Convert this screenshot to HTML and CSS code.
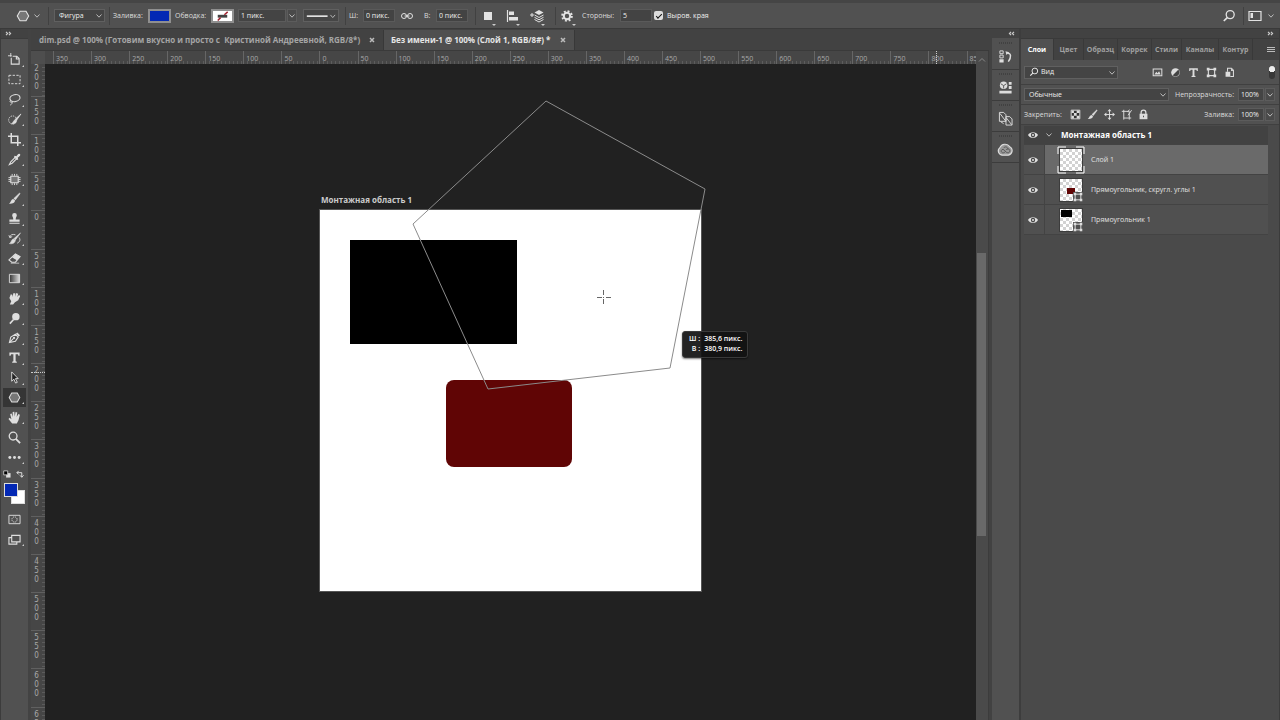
FILE: index.html
```html
<!DOCTYPE html>
<html lang="ru">
<head>
<meta charset="utf-8">
<title>Без имени-1</title>
<link rel="stylesheet" href="styles.css">
</head>
<body>
<svg class="defs" aria-hidden="true">
  <defs>
    <symbol id="chev" viewBox="0 0 8 6"><path d="M1.5 1.5 4 4.2 6.500 1.500" fill="none" stroke="currentColor" stroke-width="1"/></symbol>
    <symbol id="eye" viewBox="0 0 12 8"><path d="M1 4C3 .2 9 .2 11 4 9 7.800 3 7.800 1 4Z" fill="currentColor"/><circle cx="6" cy="4" r="2.200" fill="#484848"/><circle cx="6" cy="4" r="1" fill="currentColor"/></symbol>
    <symbol id="search" viewBox="0 0 14 14"><circle cx="8.200" cy="5.600" r="4" fill="none" stroke="currentColor" stroke-width="1.300"/><path d="M5.300 8.600 1.800 12" stroke="currentColor" stroke-width="1.700"/></symbol>
    <symbol id="hex" viewBox="0 0 14 14"><path d="M4 2.200H10L12.700 7 10 11.800H4L1.300 7Z" fill="#777" stroke="currentColor" stroke-width="1.100"/></symbol>
    <symbol id="dbl" viewBox="0 0 8 6"><path d="M1 1 3 3 1 5M4.500 1 6.500 3 4.500 5" fill="none" stroke="currentColor" stroke-width="1.400"/></symbol>
    <symbol id="brush" viewBox="0 0 14 14"><path d="M12.500 1 13 1.800 8 8.500 6.200 7Z" fill="currentColor" stroke="currentColor" stroke-width=".5"/><path d="M5.600 7.500 7.600 9.200C7.500 12 4 13 1 12.600 3 11.500 3 8 5.600 7.500Z" fill="currentColor"/></symbol>
    <symbol id="type" viewBox="0 0 14 14"><path d="M1.500 1.500H12.500V5H11.200L10.700 3.500H8.200V11L9.500 11.500V12.700H4.500V11.500L5.800 11V3.500H3.300L2.800 5H1.500Z" fill="currentColor"/></symbol>
    <symbol id="shape" viewBox="0 0 14 14"><path d="M3 3H11V11H3Z" fill="none" stroke="currentColor" stroke-width="1.400"/><path d="M1 1H4.500V4.500H1ZM9.500 1H13V4.500H9.500ZM1 9.500H4.500V13H1ZM9.500 9.500H13V13H9.500Z" fill="currentColor"/></symbol>
    <symbol id="close" viewBox="0 0 6 6"><path d="M1 1 5 5M5 1 1 5" stroke="currentColor" stroke-width="1.500"/></symbol>
  </defs>
</svg>
<div class="app">
  <header class="options">
    <button class="ib" aria-label="Многоугольник"><svg class="i14"><use href="#hex"/></svg></button>
    <button class="ib" aria-label="Наборы"><svg class="chev"><use href="#chev"/></svg></button>
    <i class="sep"></i>
    <span class="sel"><select aria-label="Режим"><option>Фигура</option></select><svg class="chev"><use href="#chev"/></svg></span>
    <i class="sep"></i>
    <span class="lab">Заливка:</span>
    <button class="swatch blue" aria-label="Цвет заливки"></button>
    <span class="lab">Обводка:</span>
    <button class="swatch none" aria-label="Цвет обводки"><svg viewBox="0 0 20 11"><path d="M5 4H15V7H5Z" fill="#444"/><path d="M5 10 8 7M12 4 15.500 1" stroke="#a32330" stroke-width="1.600"/></svg></button>
    <span class="combo"><input aria-label="Толщина обводки" value="1 пикс."><button aria-label="Толщина"><svg class="chev"><use href="#chev"/></svg></button></span>
    <button class="linebtn" aria-label="Тип линии"><svg viewBox="0 0 36 13"><path d="M3 6.500H25" stroke="#fff" stroke-width="1.500"/><path d="M28 5.200 30.500 8 33 5.200" fill="none" stroke="#bbb"/></svg></button>
    <i class="sep"></i>
    <label class="lab" for="w">Ш:</label><input class="fld" id="w" value="0 пикс.">
    <button class="ib" aria-label="Связать"><svg class="i14" viewBox="0 0 14 14"><circle cx="4" cy="7" r="2.500" fill="none" stroke="currentColor"/><circle cx="10" cy="7" r="2.500" fill="none" stroke="currentColor"/><path d="M4.500 7H9.500" stroke="currentColor"/></svg></button>
    <label class="lab" for="h">В:</label><input class="fld" id="h" value="0 пикс.">
    <i class="sep"></i>
    <button class="ib tri" aria-label="Операции"><svg class="i14" viewBox="0 0 14 14"><path d="M3 3H11V11H3Z" fill="currentColor"/></svg></button>
    <button class="ib tri" aria-label="Выравнивание"><svg class="i14" viewBox="0 0 14 14"><path d="M2.500 1V13" stroke="currentColor" stroke-width="1.200"/><path d="M4 2.500H9V6H4ZM4 8H13V11.500H4Z" fill="currentColor"/></svg></button>
    <button class="ib tri" aria-label="Порядок"><svg class="i14" viewBox="0 0 14 14"><path d="M9 1 13.500 3.500 9 6 4.500 3.500Z" fill="currentColor"/><path d="M4.500 6 9 8.500 13.500 6M4.500 8.300 9 10.800 13.500 8.300M4.500 10.500 9 13 13.500 10.500" fill="none" stroke="currentColor"/><path d="M0 6H4M2 4V8" stroke="currentColor"/></svg></button>
    <i class="sep"></i>
    <button class="ib tri" aria-label="Параметры"><svg class="i14" viewBox="0 0 14 14"><circle cx="6" cy="7" r="3.200" fill="none" stroke="currentColor" stroke-width="2"/><circle cx="6" cy="7" r="4.800" fill="none" stroke="currentColor" stroke-width="2" stroke-dasharray="1.900 1.870"/></svg></button>
    <label class="lab" for="sides">Стороны:</label><input class="fld" id="sides" value="5">
    <label class="check"><input type="checkbox" checked>Выров. края</label>
    <span></span>
    <button class="ib" aria-label="Поиск"><svg class="i14"><use href="#search"/></svg></button>
    <i class="sep"></i>
    <button class="ib" aria-label="Рабочая среда"><svg class="i14" viewBox="0 0 14 14"><path d="M1 2.500H13V11.500H1Z" fill="none" stroke="currentColor" stroke-width="1.200"/><path d="M2.500 4H5V9H2.500Z" fill="currentColor"/></svg></button>
    <button class="ib" aria-label="Выбор среды"><svg class="chev"><use href="#chev"/></svg></button>
  </header>

  <div class="body">
    <aside class="tools">
      <div class="coltop"><svg class="dbl"><use href="#dbl"/></svg></div>
      <div class="toolbox">
        <div class="toolgrid">
          <button aria-label="Монтажная область"><svg viewBox="0 0 14 14"><path d="M3 0V4M0 3H4" stroke="currentColor"/><path d="M3.500 5V12H12V6L9.500 3.500H5M9 4V6.500H12" fill="none" stroke="currentColor" stroke-width="1.200"/></svg></button>
          <button aria-label="Выделение"><svg viewBox="0 0 14 14"><path d="M1 2.500H13V11.500H1Z" fill="none" stroke="currentColor" stroke-dasharray="2.500 1.500"/></svg></button>
          <button aria-label="Лассо"><svg viewBox="0 0 14 14"><ellipse cx="7.500" cy="5.500" rx="5.500" ry="3.700" transform="rotate(-12 7.500 5.500)" fill="none" stroke="currentColor" stroke-width="1.200"/><path d="M3 8C1 9 3 11 4.500 9.500 5 11 3.500 12.500 2.500 13" fill="none" stroke="currentColor"/></svg></button>
          <button aria-label="Быстрое выделение"><svg viewBox="0 0 14 14"><circle cx="5" cy="7.500" r="4.300" fill="none" stroke="currentColor" stroke-dasharray="1.500 1"/><path d="M14 1 9 8 7.500 7ZM7.500 7.500 9 9C8.500 11.500 6 12 4 11.500 6 10.500 5.500 8 7.500 7.500Z" fill="currentColor" stroke="currentColor" stroke-width=".8"/></svg></button>
          <button aria-label="Рамка"><svg viewBox="0 0 14 14"><path d="M3.500 0V10.500H14M0 3.500H10.500V14" fill="none" stroke="currentColor" stroke-width="1.600"/></svg></button>
          <button aria-label="Пипетка"><svg viewBox="0 0 14 14"><path d="M8.500 4 3 9.500 1.500 12.500 4.500 11 10 5.500" fill="none" stroke="currentColor" stroke-width="1.200"/><path d="M7 3 9 3.500 11 1Q14 0 13 3L10.500 5 11 7 9.500 7.500 6.500 4.500Z" fill="currentColor"/></svg></button>
          <button aria-label="Заплатка"><svg viewBox="0 0 14 14"><path d="M3 3.500H11V10.500H3Z" fill="#777" stroke="currentColor" stroke-width="1.200"/><path d="M4.500 1V3M7 1V3M9.500 1V3M4.500 11V13M7 11V13M9.500 11V13M.5 5H3M.5 7H3M.5 9H3M11 5H13.500M11 7H13.500M11 9H13.500" stroke="currentColor"/></svg></button>
          <button aria-label="Кисть"><svg><use href="#brush"/></svg></button>
          <button aria-label="Штамп"><svg viewBox="0 0 14 14"><path d="M4.500 3.500A2.500 2.500 0 0 1 9.500 3.500C9.500 5 8.300 5.500 8.300 8H12.500V10.500H1.500V8H5.700C5.700 5.500 4.500 5 4.500 3.500ZM1.500 11.500H12.500V12.700H1.500Z" fill="currentColor"/></svg></button>
          <button aria-label="Архивная кисть"><svg viewBox="0 0 14 14"><path d="M13.500 1 8 8.500 6.500 7ZM6 7.500 8 9C7.500 12.500 4 13 1.500 12.500 3.500 11.500 3.500 8 6 7.500Z" fill="currentColor" stroke="currentColor" stroke-width=".6"/><path d="M2 6C2 3 5 2 8 3M1 3.500 2 6 4.500 5M12 6C14 9 12 11 10 12" fill="none" stroke="currentColor"/></svg></button>
          <button aria-label="Ластик"><svg viewBox="0 0 14 14"><path d="M8 2 13 5 8 11H4L1 8.500Z" fill="none" stroke="currentColor" stroke-width="1.200"/><path d="M8 2 13 5 9.500 9 4.500 6ZM3 11.500H12V12.500H3Z" fill="currentColor"/></svg></button>
          <button aria-label="Градиент"><svg viewBox="0 0 14 14"><defs><linearGradient id="g"><stop stop-color="#333"/><stop offset="1" stop-color="#ddd"/></linearGradient></defs><path d="M1.500 2.500H12.500V11.500H1.500Z" fill="url(#g)" stroke="currentColor"/></svg></button>
          <button aria-label="Палец"><svg viewBox="0 0 14 14"><path d="M2 13.500 3.500 10 1.500 6.500 3 2.500 4.500 3V5.500L6 1 8 1.500 7.500 5 9 1 11 2 10 5.500 12 3 13 4.500 11 9 7.500 11 5.500 13.500Z" fill="currentColor"/></svg></button>
          <button aria-label="Осветлитель"><svg viewBox="0 0 14 14"><circle cx="8.500" cy="5" r="4" fill="currentColor"/><path d="M6 8 2 12.500" stroke="currentColor" stroke-width="1.700"/></svg></button>
          <button aria-label="Перо"><svg viewBox="0 0 14 14"><path d="M1.500 12.500 3 6.500 8 3.500 11 6.500 8 11ZM1.500 12.500 6 8" fill="none" stroke="currentColor" stroke-width="1.200"/><circle cx="6.500" cy="7.500" r="1.200" fill="currentColor"/><path d="M8.500 3 10 1.500 13 4.500 11.500 6Z" fill="currentColor"/></svg></button>
          <button aria-label="Текст"><svg><use href="#type"/></svg></button>
          <button aria-label="Стрелка"><svg viewBox="0 0 14 14"><path d="M4 1V11L6.300 8.800 8.200 13 10 12.200 8 8.200H11Z" fill="#222" stroke="currentColor"/></svg></button>
          <button class="on" aria-label="Фигура"><svg><use href="#hex"/></svg></button>
          <button aria-label="Рука"><svg viewBox="0 0 14 14"><path d="M4.500 13.500 .5 8.500 1.700 7.300 3.700 8.800 2.300 3.200 3.900 2.700 5.200 6.500 5 1 6.800.8 7.200 6 8.200 1.200 10 1.500 9.300 6.500 11.200 3.300 12.800 4 11.300 10 9.500 13.500Z" fill="currentColor"/></svg></button>
          <button class="notri" aria-label="Масштаб"><svg viewBox="0 0 14 14"><circle cx="5.500" cy="5.500" r="4.200" fill="none" stroke="currentColor" stroke-width="1.400"/><path d="M8.500 8.500 13 13" stroke="currentColor" stroke-width="2"/></svg></button>
          <button aria-label="Ещё"><svg viewBox="0 0 14 14"><circle cx="2" cy="7" r="1.600" fill="currentColor"/><circle cx="7" cy="7" r="1.600" fill="currentColor"/><circle cx="12" cy="7" r="1.600" fill="currentColor"/></svg></button>
        </div>
        <div class="mini">
          <button aria-label="Цвета по умолчанию"><svg viewBox="0 0 9 9"><path d="M3.500 3.500H8.500V8.500H3.500Z" fill="#ddd"/><path d="M.8 1H5.300V5.500H.8Z" fill="#000" stroke="#ccc"/></svg></button>
          <button aria-label="Поменять цвета"><svg viewBox="0 0 9 9"><path d="M3 1 1 3 3 5M1 3H6.500V8M4.500 6 6.500 8.200 8.500 6" fill="none" stroke="#ddd" stroke-width="1.100"/></svg></button>
        </div>
        <div class="colors"><button class="bgc" aria-label="Фон"></button><button class="fgc" aria-label="Основной цвет"></button></div>
        <button class="tb2 notri" aria-label="Быстрая маска"><svg viewBox="0 0 14 14"><path d="M1 2.500H13V11.500H1Z" fill="none" stroke="currentColor"/><circle cx="7" cy="7" r="2.800" fill="none" stroke="currentColor" stroke-dasharray="1.300 .9"/></svg></button>
        <button class="tb2" aria-label="Режим экрана"><svg viewBox="0 0 14 14"><path d="M4 9.500V2.500H13V9.500ZM4 5H1V12H9.500V9.500" fill="none" stroke="currentColor" stroke-width="1.200"/></svg></button>
      </div>
    </aside>

    <main class="doc">
      <nav class="tabs">
        <div class="tab first-tab"><span>dim.psd @ 100% (Готовим вкусно и просто с&nbsp; Кристиной Андреевной, RGB/8*)</span><button aria-label="Закрыть"><svg><use href="#close"/></svg></button></div>
        <div class="tab active"><span>Без имени-1 @ 100% (Слой 1, RGB/8#) *</span><button aria-label="Закрыть"><svg><use href="#close"/></svg></button></div>
      </nav>
      <div class="work">
        <div class="corner"></div>
        <div class="hr"><i class="lead"></i><span>350</span><span>300</span><span>250</span><span>200</span><span>150</span><span>100</span><span>50</span><span>0</span><span>50</span><span>100</span><span>150</span><span>200</span><span>250</span><span>300</span><span>350</span><span>400</span><span>450</span><span>500</span><span>550</span><span>600</span><span>650</span><span>700</span><span>750</span><span>800</span><span class="last">850</span><b class="hmark"></b></div>
        <div class="vscroll"><svg class="up" viewBox="0 0 8 6"><path d="M1 4.500 4 1.500 7 4.500" fill="none" stroke="#888"/></svg><div class="thumb"></div></div>
        <div class="vr"><span class="first">200</span><span>150</span><span>100</span><span>50</span><span>0</span><span>50</span><span>100</span><span>150</span><span>200</span><span>250</span><span>300</span><span>350</span><span>400</span><span>450</span><span>500</span><span>550</span><span>600</span><span class="last">650</span><b class="vmark"></b></div>
        <div class="canvas">
          <div class="abname">Монтажная область 1</div>
          <svg class="art" viewBox="0 0 720 656" width="720" height="656">
            <rect x="274.500" y="145.500" width="382" height="382" fill="#fff" stroke="#555"/>
            <rect x="305" y="176" width="167" height="104" fill="#000"/>
            <rect x="401" y="316" width="126" height="87" rx="8" fill="#600505"/>
            <path d="M501 37 660 125 625 304 443 325 368 160Z" fill="none" stroke="#8b8b8b"/>
            <path d="M558.500 226V231M558.500 235V240M552 233.500H557M561 233.500H566" stroke="#666"/><path d="M558 233.500H559" stroke="#666"/>
          </svg>
          <dl class="hint"><dt>Ш :</dt><dd>385,6 пикс.</dd><dt>В :</dt><dd>380,9 пикс.</dd></dl>
        </div>
      </div>
    </main>

    <aside class="dock">
      <div class="coltop"><svg class="dbl flip"><use href="#dbl"/></svg></div>
      <button aria-label="История"><svg viewBox="0 0 16 16"><path d="M2 2H5.500V5H2ZM2 6.500H5.500V9.500H2Z" fill="none" stroke="currentColor"/><path d="M1.500 11H6V14.500H1.500ZM8 2.500 9 6.500 12 3.500Z" fill="currentColor"/><path d="M10 4.500C14 4 14.500 9 11 13.500" fill="none" stroke="currentColor" stroke-width="1.600"/></svg></button>
      <button aria-label="Свойства"><svg viewBox="0 0 16 16"><circle cx="6" cy="5.500" r="4" fill="currentColor"/><path d="M3 4 6 6 9 4M6 6V9" fill="none" stroke="#555"/><path d="M11.500 2H14.500V5H11.500ZM11.500 6.500H14.500V9.500H11.500ZM1.500 11.500H14.500V14.500H1.500Z" fill="currentColor"/></svg></button>
      <button aria-label="Библиотеки"><svg viewBox="0 0 16 16"><path d="M1.500 1.500H6L8.500 4V11H1.500ZM2 2.500 8 10.500" fill="none" stroke="currentColor"/><path d="M8.500 6H12.500L15 8.500V15H8.500ZM9 7.500 14.500 14.500M3 11.500 6 13.500" fill="none" stroke="currentColor"/></svg></button>
      <button aria-label="Creative Cloud"><svg viewBox="0 0 16 16"><path d="M5 14A4.500 4.500 0 0 1 2 6 6 6 0 0 1 12.500 5 4.800 4.800 0 0 1 11 14Z" fill="#999" stroke="currentColor" stroke-width="1.200"/><path d="M9.500 11.500 6.500 8.500C5 7 3 8.500 3.500 10.200 4.500 12.500 7 11.500 8 10M6 6.500C7.500 4 11 5.500 10.500 8M8.500 8.500C10.500 6 13.500 8 12.500 10.500 11.500 12 10 11.500 9.500 11" fill="none" stroke="#555"/></svg></button>
    </aside>

    <aside class="panel">
      <div class="coltop end"><svg class="dbl"><use href="#dbl"/></svg></div>
      <nav class="ptabs"><button class="active">Слои</button><button>Цвет</button><button>Образц</button><button>Коррек</button><button>Стили</button><button>Каналы</button><button>Контур</button><button class="menu" aria-label="Меню"><svg viewBox="0 0 8 8"><path d="M0 1.500H8M0 3.500H8M0 5.500H8" stroke="currentColor"/></svg></button></nav>
      <div class="row tall">
        <span class="sel kind"><svg class="lead-icon"><use href="#search"/></svg><select aria-label="Фильтр"><option>Вид</option></select><svg class="chev"><use href="#chev"/></svg></span>
        <span class="icons filters">
          <button aria-label="Пиксели"><svg viewBox="0 0 14 14"><path d="M1.500 2.500H12.500V11H1.500Z" fill="none" stroke="currentColor" stroke-width="1.300"/><path d="M3 9.500 5.500 6 7 8 9 5.500 11 9.500Z" fill="currentColor"/></svg></button>
          <button aria-label="Коррекция"><svg viewBox="0 0 14 14"><circle cx="7" cy="7" r="5.500" fill="currentColor"/><path d="M3.500 10.500A4.900 4.900 0 0 0 10.500 3.500Z" fill="#444"/></svg></button>
          <button aria-label="Текст"><svg><use href="#type"/></svg></button>
          <button aria-label="Фигуры"><svg><use href="#shape"/></svg></button>
          <button aria-label="Смарт-объекты"><svg viewBox="0 0 14 14"><path d="M4.500 6V1.500H9.500L12 4V12H8" fill="none" stroke="currentColor" stroke-width="1.300"/><path d="M2 6H8V12.500H2ZM9 1.500V5H12Z" fill="currentColor"/></svg></button>
        </span>
        <input class="toggle" type="checkbox" role="switch" aria-label="Фильтрация" checked>
      </div>
      <div class="row">
        <span class="sel mode"><select aria-label="Наложение"><option>Обычные</option></select><svg class="chev"><use href="#chev"/></svg></span>
        <label class="lab push" for="op">Непрозрачность:</label>
        <span class="combo pct"><input id="op" value="100%"><button aria-label="Изменить непрозрачность"><svg class="chev"><use href="#chev"/></svg></button></span>
      </div>
      <div class="row">
        <span class="lab">Закрепить:</span>
        <span class="icons locks">
          <button aria-label="Прозрачность"><svg viewBox="0 0 14 14"><path d="M1.500 1.500H12.500V12.500H1.500Z" fill="#333" stroke="currentColor" stroke-width="1.200"/><path d="M2 2H5V5H2ZM8.500 2H12V5H8.500ZM5 5H8.500V8.500H5ZM2 8.500H5V12H2ZM8.500 8.500H12V12H8.500Z" fill="currentColor"/></svg></button>
          <button aria-label="Рисование"><svg><use href="#brush"/></svg></button>
          <button aria-label="Положение"><svg viewBox="0 0 14 14"><path d="M7 2V12M2 7H12" stroke="currentColor" stroke-width="1.200"/><path d="M7 0 9.500 3H4.500ZM7 14 4.500 11H9.500ZM0 7 3 4.500V9.500ZM14 7 11 9.500V4.500Z" fill="currentColor"/></svg></button>
          <button aria-label="Вложение"><svg viewBox="0 0 14 14"><path d="M3.500 1V11.500H10.500V3H1M8 3.500 11 1M9 8 13.500 1.500M10.500 11.500H13M3.500 11.500V13.500M10.500 11.500V13.500" fill="none" stroke="currentColor" stroke-width="1.200"/></svg></button>
          <button aria-label="Всё"><svg viewBox="0 0 14 14"><path d="M4 7V4.500A3 3 0 0 1 10 4.500V7" fill="none" stroke="currentColor" stroke-width="1.600"/><path d="M2 6H12V13H2Z" fill="currentColor"/><path d="M7 8.500V10.500" stroke="#444" stroke-width="1.200"/></svg></button>
        </span>
        <label class="lab push" for="fl">Заливка:</label>
        <span class="combo pct"><input id="fl" value="100%"><button aria-label="Изменить заливку"><svg class="chev"><use href="#chev"/></svg></button></span>
      </div>
      <ul class="layers">
        <li class="group"><button class="eye" aria-label="Видимость"><svg><use href="#eye"/></svg></button><div class="layer"><svg class="chev"><use href="#chev"/></svg><strong>Монтажная область 1</strong></div></li>
        <li class="current"><button class="eye" aria-label="Видимость"><svg><use href="#eye"/></svg></button><div class="layer"><span class="th sel-th"><svg viewBox="0 0 28 28"><path d="M1 8V1H9M19 1H27V8M27 20V27H19M9 27H1V20" fill="none" stroke="#fff"/></svg></span><span>Слой 1</span></div></li>
        <li><button class="eye" aria-label="Видимость"><svg><use href="#eye"/></svg></button><div class="layer"><span class="th"><i class="red"></i><svg class="badge"><use href="#shape"/></svg></span><span>Прямоугольник, скругл. углы 1</span></div></li>
        <li><button class="eye" aria-label="Видимость"><svg><use href="#eye"/></svg></button><div class="layer"><span class="th"><i class="blk"></i><svg class="badge"><use href="#shape"/></svg></span><span>Прямоугольник 1</span></div></li>
      </ul>
    </aside>
  </div>
</div>
</body>
</html>
```
FILE: styles.css
```css
* { box-sizing: border-box; }
body { margin: 0; background: #424242; color: #e2e2e2; font: 500 7px/10px "Open Sans", "Noto Sans", sans-serif; }
button, input, select { font: inherit; color: inherit; border: 0; padding: 0; margin: 0; background: none; border-radius: 0; outline: 0; min-width: 0; }
select { appearance: none; width: 100%; }
svg { display: block; overflow: visible; }
.defs { position: absolute; width: 0; height: 0; }
.app { height: 100vh; display: flex; flex-direction: column; overflow: hidden; }
.chev { width: 8px; height: 6px; color: #bbb; flex: none; }
.i14 { width: 14px; height: 14px; }
.lab { white-space: nowrap; color: #dcdcdc; }

/* Options bar */
.options { flex: none; height: 29px; border-top: 3px solid #454545; border-bottom: 1px solid #3a3a3a; background: #515151; padding-left: 16px;
  display: grid; align-items: center;
  grid-template-columns: 17px 10px 11px 51px 8px 35px 27px 36px 27px 65px 38px 8px 14px 37px 24px 12px 33px 12px 24px 25px 20px 11px 21px 38px 34px 60px 1fr 17px 9px 19px 13px; }
.ib { display: grid; place-items: center start; position: relative; height: 24px; color: #e2e2e2; }
.tri::after { content: ""; position: absolute; left: 11px; bottom: 2px; border: 2px solid transparent; border-top-color: #ccc; border-bottom: 0; }
.sep { width: 1px; height: 18px; background: #414141; justify-self: center; }
.sel { position: relative; display: flex; align-items: center; height: 13px; border: 1px solid #606060; background: #444; color: #eee; }
.sel select { padding-left: 4px; height: 11px; line-height: 10px; }
.sel .chev { position: absolute; right: 1px; top: 3px; pointer-events: none; }
.swatch { width: 23px; height: 14px; border: 2px solid #8f8f8f; }
.blue { background: #0328b4; }
.none { background: #fff; }
.combo { display: flex; gap: 1px; height: 13px; width: 59px; }
.combo input { flex: 1; width: 0; background: #444; border: 1px solid #5c5c5c; padding-left: 2px; color: #eee; }
.combo button { width: 10px; border: 1px solid #5c5c5c; background: #4a4a4a; display: grid; place-items: center; }
.linebtn { width: 36px; height: 13px; border: 1px solid #606060; background: #464646; }
.fld { width: 32px; height: 13px; background: #434343; border: 1px solid #5a5a5a; padding-left: 2px; color: #eee; }
.check { display: flex; align-items: center; gap: 4px; white-space: nowrap; color: #eee; }
.check input { appearance: none; width: 9px; height: 9px; border-radius: 2px; background: #ddd; display: grid; place-items: center; }
.check input::after { content: ""; width: 5px; height: 2px; border-left: 1px solid #111; border-bottom: 1px solid #111; rotate: -45deg; }

.body { flex: 1; min-height: 0; display: flex; }
.coltop { flex: none; height: 9px; background: #424242; display: flex; align-items: center; padding-left: 4px; }
.dbl { width: 7px; height: 5px; color: #ccc; }
.flip { scale: -1 1; }
.end { justify-content: flex-end; padding-right: 5px; }

/* Tools */
.tools { width: 31px; flex: none; display: flex; flex-direction: column; border-left: 1px solid #3c3c3c; border-right: 3px solid #434343; }
.toolbox { flex: 1; background: #515151; padding-top: 11px; display: flex; flex-direction: column; border-top: 1px solid #3c3c3c; }
.toolgrid { display: grid; grid-auto-rows: 1fr; height: 417px; }
.toolgrid button, .tb2 { position: relative; display: grid; place-items: center; color: #dedede; margin: 0 2px; }
.tb2 { height: 20px; }
.toolgrid svg, .tb2 svg { width: 13px; height: 13px; }
.toolgrid button::after, .tb2::after { content: ""; position: absolute; right: 2px; bottom: 3px; border: 1px solid #ccc; border-left-color: transparent; border-top-color: transparent; }
.toolgrid .notri::after, .tb2.notri::after { display: none; }
.toolgrid .on { background: #353535; }
.mini { display: flex; justify-content: space-between; padding: 3px 4px 3px 2px; }
.mini svg { width: 8px; height: 8px; }
.colors { position: relative; height: 28px; }
.colors button { position: absolute; width: 14px; height: 14px; border: 1px solid #ddd; }
.fgc { left: 3px; top: 2px; background: #0328b4; }
.bgc { left: 10px; top: 9px; background: #fff; }

/* Document */
.doc { flex: 1; min-width: 0; display: flex; flex-direction: column; }
.tabs { flex: none; height: 22px; padding-top: 1px; display: flex; background: #424242; border-bottom: 1px solid #3a3a3a; }
.tab { display: flex; align-items: center; justify-content: space-between; width: 191px; padding: 0 8px 0 7px; font: bold 8px/12px "Open Sans", "Noto Sans", sans-serif; color: #a5a5a5; white-space: nowrap; border-right: 1px solid #383838; }
.first-tab { width: 353px; padding-left: 8px; }
.tab.active { background: #4f4f4f; color: #e5e5e5; }
.tab svg { width: 6px; height: 6px; color: #bbb; }
.work { flex: 1; min-height: 0; display: grid; grid-template: 13px 1fr / 14px 1fr 13px; }
.corner { background: #4e4e4e; }
.hr { background: #464646; display: flex; overflow: hidden; position: relative; color: #a8a8a8; }
.hr .lead { width: 8px; flex: none; }
.hr span { flex: 1 0 0; min-width: 0; border-left: 1px solid #666; padding: 2px 0 0 2px; line-height: 11px;
  background: repeating-linear-gradient(90deg, transparent 0 3px, #5c5c5c 3px 4px) left bottom / 100% 3px no-repeat; }
.hr .last { flex-grow: .18; overflow: hidden; }
.vr { background: #464646; display: flex; flex-direction: column; overflow: hidden; position: relative; color: #a8a8a8; font: 8px/9px "DejaVu Sans Condensed", "DejaVu Sans", sans-serif; }
.vr span { flex: 1 0 0; min-height: 0; border-top: 1px solid #606060; padding: 2px 5px 0 1px; writing-mode: vertical-lr; text-orientation: upright; overflow: hidden;
  background: repeating-linear-gradient(180deg, transparent 0 3px, #5c5c5c 3px 4px) right top / 3px 100% no-repeat; }
.vr .first { flex: none; height: 32px; border-top: 0; padding: 0 5px 6px 1px; text-align: end; }
.vr .last { flex-grow: .3; }
.hmark { position: absolute; right: 39px; top: 0; width: 1px; height: 13px; border-left: 1px dotted #ccc; }
.vmark { position: absolute; top: 308px; left: 0; width: 14px; border-top: 1px dotted #ccc; }
.vscroll { grid-column: 3; grid-row: 1 / 3; background: #4a4a4a; display: flex; flex-direction: column; border-right: 1px solid #3c3c3c; }
.up { width: 8px; height: 6px; margin: 6px auto 0 2px; flex: none; }
.thumb { margin: 190px 2px 0 1px; height: 283px; background: #696969; }
.canvas { background: #212121; position: relative; overflow: hidden; }
.art { position: absolute; left: 0; top: 0; }
.abname { position: absolute; left: 276px; top: 130px; font: bold 8px/12px "Open Sans", "Noto Sans", sans-serif; color: #ccc; }
.hint { position: absolute; left: 637px; top: 267px; margin: 0; padding: 2px 5px 3px 6px; display: grid; grid-template-columns: auto auto; column-gap: 4px; background: rgba(18, 18, 18, .93); border: 1px solid #3a3a3a; border-radius: 3px; color: #fff; font-weight: 600; box-shadow: 0 1px 2px rgba(0, 0, 0, .5); white-space: nowrap; }
.hint dt { text-align: right; }
.hint dd { margin: 0; }

/* Dock */
.dock { width: 32px; flex: none; background: #515151; border-left: 3px solid #424242; border-right: 2px solid #3d3d3d; display: flex; flex-direction: column; }
.dock .coltop { justify-content: flex-end; padding-right: 4px; margin-bottom: 1px; }
.dock button { height: 31px; border-bottom: 1px solid #3c3c3c; display: grid; place-items: center; color: #ddd; padding-top: 5px; background: repeating-linear-gradient(90deg, #414141 0 1px, transparent 1px 2px) center 3px / 14px 2px no-repeat; }
.dock button svg { width: 15px; height: 15px; }

/* Layers panel */
.panel { width: 259px; flex: none; background: #4a4a4a; border-right: 1px solid #3b3b3b; display: flex; flex-direction: column; }
.ptabs { flex: none; height: 22px; display: grid; grid-template-columns: 33px 30px 34px 34px 30px 37px 34px 1fr; background: #424242; border-top: 1px solid #3a3a3a; font-weight: bold; color: #a0a0a0; }
.ptabs button { border-right: 1px solid #393939; white-space: nowrap; text-align: center; overflow: hidden; }
.ptabs .active { background: #515151; color: #fff; }
.ptabs .menu { border: 0; justify-self: end; margin-right: 4px; }
.ptabs svg { width: 8px; height: 8px; color: #bbb; }
.row { flex: none; height: 20px; display: flex; align-items: center; background: #515151; border-bottom: 1px solid #404040; padding: 0 4px 0 3px; }
.tall { height: 25px; }
.kind { width: 94px; }
.kind select { padding-left: 2px; }
.lead-icon { width: 10px; height: 10px; margin-left: 4px; flex: none; }
.mode { width: 145px; }
.icons { display: flex; gap: 7px; color: #ddd; }
.icons svg { width: 11px; height: 11px; }
.filters { margin-left: 34px; }
.locks { margin-left: 8px; gap: 6px; }
.toggle { appearance: none; margin-left: auto; width: 6px; height: 13px; border-radius: 3px; background: radial-gradient(circle at 3px 3px, #eee 3px, #383838 3px); }
.push { margin-left: auto; margin-right: 4px; }
.pct { width: 37px; }
.layers { list-style: none; margin: 1px 11px 0 3px; padding: 0; }
.layers li { height: 30px; display: flex; background: #505050; border-bottom: 1px solid #434343; }
.layers .group { height: 19px; background: #424242; }
.eye { width: 21px; flex: none; display: grid; place-items: center start; padding-left: 3px; border-right: 1px solid #434343; }
.eye svg { width: 12px; height: 8px; }
.layer { flex: 1; display: flex; align-items: center; gap: 8px; padding-left: 14px; white-space: nowrap; }
.group .layer { padding-left: 0; font-size: 8px; color: #fff; }
.group .eye { border-right: 0; }
.current .layer { background: #6a6a6a; }
.th { position: relative; width: 24px; height: 24px; background: repeating-conic-gradient(#d2d2d2 0 25%, #fff 0 50%) 0 0 / 6px 6px; border: 1px solid #3c3c3c; }
.sel-th svg { position: absolute; left: -3px; top: -3px; width: 28px; height: 28px; }
.red { position: absolute; left: 7px; top: 9px; width: 8px; height: 6px; background: #600505; }
.blk { position: absolute; left: 1px; top: 1px; width: 11px; height: 7px; background: #000; }
.badge { position: absolute; right: -1px; bottom: -1px; width: 10px; height: 10px; background: #505050; color: #ddd; }
```
